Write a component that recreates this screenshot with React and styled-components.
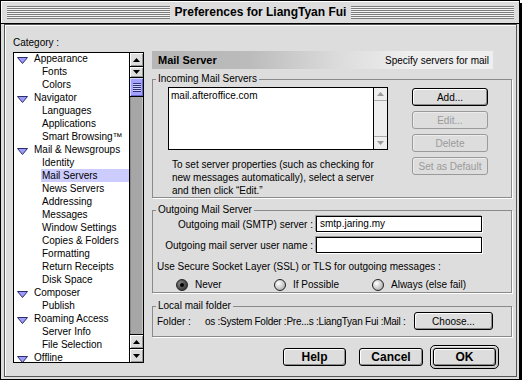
import React from "react";
import styled, { createGlobalStyle } from "styled-components";

const GlobalStyle = createGlobalStyle`
  html, body {
    margin: 0;
    padding: 0;
    background: #fff;
  }
  body {
    font-family: "Liberation Sans", Arial, sans-serif;
    font-size: 10px;
    color: #000;
  }
  * {
    box-sizing: border-box;
  }
`;

const Window = styled.div`
  width: 520px;
  height: 380px;
  border: 1px solid #000;
  background: #dddddd;
  box-shadow: 2px 3px 0 #000;
  display: flex;
  flex-direction: column;
`;

const TitleBar = styled.div`
  height: 23px;
  flex-shrink: 0;
  border-bottom: 1px solid #000;
  box-shadow: inset 1px 1px 0 #fff;
  display: flex;
  align-items: center;
  gap: 3px;
  padding: 0 5px 0 6px;
`;

const Stripes = styled.div`
  flex: 1;
  height: 13px;
  background: repeating-linear-gradient(
    to bottom,
    #7c7c7c 0 1px,
    #f4f4f4 1px 2px
  );
`;

const Title = styled.div`
  font: bold 12px "Liberation Sans", Arial, sans-serif;
  white-space: nowrap;
  padding: 0 2px;
`;

const Content = styled.div`
  flex: 1;
  margin: 0 2px 2px 3px;
  border: 1px solid #555;
  box-shadow: inset 1px 1px 0 #fff;
  display: flex;
  gap: 8px;
  padding: 12px 3px 0 8px;
`;

const Sidebar = styled.div`
  width: 131px;
  display: flex;
  flex-direction: column;
`;

const SideLabel = styled.div`
  line-height: 11px;
  margin-bottom: 4px;
`;

const CategoryList = styled.div`
  height: 311px;
  border: 1px solid #000;
  background: #fff;
  display: flex;
  overflow: hidden;
`;

const Items = styled.div`
  flex: 1;
  overflow: hidden;
  margin-top: -1px;
`;

const Row = styled.div`
  height: 13px;
  display: flex;
  align-items: center;
  padding-left: ${(p) => (p.$top ? 3 : 27)}px;
  white-space: nowrap;
`;

const Twisty = styled.svg`
  width: 11px;
  height: 7px;
  margin: 3px 5px 0 0;
  flex-shrink: 0;
`;

const ItemLabel = styled.span`
  flex: 1;
  line-height: 13px;
  padding-left: 1px;
  background: ${(p) => (p.$selected ? "#ccccff" : "transparent")};
`;

const ScrollBar = styled.div`
  width: 14px;
  border-left: 1px solid #000;
  display: flex;
  flex-direction: column;
  background: ${(p) => (p.$disabled ? "#eeeeee" : "#a6a6a6")};
  box-shadow: ${(p) =>
    p.$disabled ? "none" : "inset 1px 0 0 #8a8a8a, inset -1px 0 0 #c4c4c4"};
`;

const ScrollArrow = styled.div`
  height: ${(p) => p.$h || 14}px;
  flex-shrink: 0;
  display: flex;
  align-items: center;
  justify-content: center;
  background: ${(p) => (p.$disabled ? "#eeeeee" : "#dddddd")};
  border-${(p) => (p.$bottom ? "top" : "bottom")}: 1px solid
    ${(p) => (p.$disabled ? "#aaa" : "#000")};
  box-shadow: ${(p) =>
    p.$disabled ? "none" : "inset 1px 1px 0 #fff, inset -1px -1px 0 #999"};
`;

const Thumb = styled.div`
  height: 19px;
  flex-shrink: 0;
  background: #a3a3ff;
  border-bottom: 1px solid #000;
  box-shadow: inset 1px 1px 0 #d6d6ff, inset -1px -1px 0 #6a6acc;
  display: flex;
  align-items: center;
  justify-content: center;
`;

const Grip = styled.div`
  width: 8px;
  height: 9px;
  background: repeating-linear-gradient(
    to bottom,
    #30307a 0 1px,
    #d0d0ff 1px 2px
  );
`;

const Track = styled.div`
  flex: 1;
`;

const Main = styled.div`
  width: 360px;
  margin-top: 14px;
  display: flex;
  flex-direction: column;
`;

const HeaderBar = styled.div`
  width: 341px;
  height: 18px;
  display: flex;
  align-items: center;
  justify-content: space-between;
  padding: 0 4px 0 6px;
  background: linear-gradient(
    to right,
    #b6b6b6 0%,
    #bbbbbb 28%,
    #dcdcdc 55%,
    #eeeeee 75%,
    #efefef 100%
  );
`;

const HeaderTitle = styled.span`
  font: bold 11px "Liberation Sans", Arial, sans-serif;
`;

const HeaderNote = styled.span`
  font-size: 10px;
`;

const Group = styled.fieldset`
  margin: ${(p) => p.$mt}px 0 0;
  padding: 0;
  min-width: 0;
  border: 1px solid #8a8a8a;
  box-shadow: 1px 1px 0 #fff;
`;

const Legend = styled.legend`
  margin-left: 3px;
  padding: 0 2px;
  line-height: 12px;
  font-size: 10px;
`;

const IncomingBody = styled.div`
  display: grid;
  grid-template-columns: 220px 76px;
  column-gap: 24px;
  padding: 2px 0 0 15px;
`;

const ServerList = styled.div`
  height: 63px;
  border: 1px solid #000;
  background: #fff;
  display: flex;
`;

const ServerItems = styled.div`
  flex: 1;
  padding: 1px 2px;
  line-height: 13px;
`;

const HelpText = styled.p`
  margin: 8px 0 0;
  padding-left: 4px;
  line-height: 13px;
`;

const ButtonColumn = styled.div`
  display: flex;
  flex-direction: column;
  gap: 5px;
  margin-top: 1px;
`;

const PushButton = styled.button`
  width: ${(p) => p.$w}px;
  height: ${(p) => p.$h || 18}px;
  margin-right: ${(p) => p.$mr || 0}px;
  padding: 0;
  border: 1px solid ${(p) => (p.disabled ? "#9a9a9a" : "#000")};
  border-radius: 3px;
  background: #dddddd;
  color: ${(p) => (p.disabled ? "#9a9a9a" : "#000")};
  font: ${(p) => (p.$bold ? "bold 12px" : "10px")} "Liberation Sans", Arial,
    sans-serif;
  box-shadow: ${(p) =>
    p.disabled
      ? "inset 1px 1px 0 #ececec"
      : "inset 1px 1px 0 #fff, inset -1px -1px 0 #8c8c8c"};
  flex-shrink: 0;
`;

const OkFrame = styled.div`
  border: 1px solid #000;
  border-radius: 5px;
  padding: 2px;
  background: #c8c8c8;
  box-shadow: inset 1px 1px 0 #eee;
  display: flex;
`;

const OutgoingBody = styled.div`
  padding: 0 0 1px 4px;
  display: flex;
  flex-direction: column;
`;

const FieldRow = styled.div`
  display: grid;
  grid-template-columns: 156px 166px;
  column-gap: 3px;
  align-items: center;
  margin-top: ${(p) => p.$mt || 0}px;
`;

const FieldLabel = styled.label`
  text-align: right;
  white-space: nowrap;
`;

const TextInput = styled.div`
  height: 16px;
  border: 1px solid #000;
  background: #fff;
  box-shadow: -1px -1px 0 #999, 1px 1px 0 #fff;
  padding: 0 3px;
  line-height: 14px;
`;

const Line = styled.div`
  line-height: 12px;
  margin-top: ${(p) => p.$mt || 0}px;
`;

const RadioRow = styled.div`
  display: grid;
  grid-template-columns: repeat(3, 98px);
  padding-left: 19px;
  margin-top: 6px;
  height: 12px;
`;

const RadioOption = styled.div`
  display: flex;
  align-items: center;
  gap: 7px;
  line-height: 12px;
  white-space: nowrap;
`;

const RadioCircle = styled.span`
  width: 12px;
  height: 12px;
  border-radius: 50%;
  border: 1px solid #222;
  flex-shrink: 0;
  display: flex;
  align-items: center;
  justify-content: center;
  background: ${(p) =>
    p.$checked
      ? "radial-gradient(circle at 35% 35%, #888 0, #555 45%, #2a2a2a 100%)"
      : "radial-gradient(circle at 35% 35%, #fff 0, #d8d8d8 40%, #9a9a9a 100%)"};
`;

const RadioDot = styled.span`
  width: 4px;
  height: 4px;
  border-radius: 50%;
  background: #000;
`;

const FolderBody = styled.div`
  display: flex;
  align-items: center;
  padding: 0 18px 6px 4px;
`;

const FolderLabel = styled.span`
  width: 48px;
  flex-shrink: 0;
`;

const FolderPath = styled.span`
  flex: 1;
  white-space: nowrap;
  letter-spacing: -0.25px;
`;

const ButtonRow = styled.div`
  display: flex;
  align-items: center;
  justify-content: flex-end;
  gap: 7px;
  margin-top: 8px;
  padding-right: 13px;
`;

const Arrow = ({ up, color = "#000" }) => (
  <svg width="7" height="4" viewBox="0 0 7 4">
    <polygon points={up ? "3.5,0 7,4 0,4" : "0,0 7,0 3.5,4"} fill={color} />
  </svg>
);

const categories = [
  { label: "Appearance", top: true },
  { label: "Fonts" },
  { label: "Colors" },
  { label: "Navigator", top: true },
  { label: "Languages" },
  { label: "Applications" },
  { label: "Smart Browsing™" },
  { label: "Mail & Newsgroups", top: true },
  { label: "Identity" },
  { label: "Mail Servers", selected: true },
  { label: "News Servers" },
  { label: "Addressing" },
  { label: "Messages" },
  { label: "Window Settings" },
  { label: "Copies & Folders" },
  { label: "Formatting" },
  { label: "Return Receipts" },
  { label: "Disk Space" },
  { label: "Composer", top: true },
  { label: "Publish" },
  { label: "Roaming Access", top: true },
  { label: "Server Info" },
  { label: "File Selection" },
  { label: "Offline", top: true },
];

const App = () => {
  return (
    <>
      <GlobalStyle />
      <Window>
        <TitleBar>
          <Stripes />
          <Title>Preferences for LiangTyan Fui</Title>
          <Stripes />
        </TitleBar>
        <Content>
          <Sidebar>
            <SideLabel>Category :</SideLabel>
            <CategoryList>
              <Items>
                {categories.map((item) => (
                  <Row key={item.label} $top={item.top}>
                    {item.top && (
                      <Twisty viewBox="0 0 11 7">
                        <polygon
                          points="0.5,0.5 10.5,0.5 5.5,6.5"
                          fill="#9c9cff"
                          stroke="#2c2c66"
                          strokeWidth="1"
                        />
                      </Twisty>
                    )}
                    <ItemLabel $selected={item.selected}>{item.label}</ItemLabel>
                  </Row>
                ))}
              </Items>
              <ScrollBar>
                <ScrollArrow>
                  <Arrow up />
                </ScrollArrow>
                <ScrollArrow $h={11}>
                  <Arrow />
                </ScrollArrow>
                <Thumb>
                  <Grip />
                </Thumb>
                <Track />
                <ScrollArrow $bottom>
                  <Arrow up />
                </ScrollArrow>
                <ScrollArrow $bottom>
                  <Arrow />
                </ScrollArrow>
              </ScrollBar>
            </CategoryList>
          </Sidebar>

          <Main>
            <HeaderBar>
              <HeaderTitle>Mail Server</HeaderTitle>
              <HeaderNote>Specify servers for mail</HeaderNote>
            </HeaderBar>

            <Group $mt={4}>
              <Legend>Incoming Mail Servers</Legend>
              <IncomingBody>
                <div>
                  <ServerList>
                    <ServerItems>mail.afteroffice.com</ServerItems>
                    <ScrollBar $disabled>
                      <ScrollArrow $disabled $h={13}>
                        <Arrow up color="#9a9a9a" />
                      </ScrollArrow>
                      <Track />
                      <ScrollArrow $disabled $bottom $h={13}>
                        <Arrow color="#9a9a9a" />
                      </ScrollArrow>
                    </ScrollBar>
                  </ServerList>
                  <HelpText>
                    To set server properties (such as checking for
                    <br />
                    new messages automatically), select a server
                    <br />
                    and then click “Edit.”
                  </HelpText>
                </div>
                <ButtonColumn>
                  <PushButton $w={76}>Add...</PushButton>
                  <PushButton $w={76} disabled>
                    Edit...
                  </PushButton>
                  <PushButton $w={76} disabled>
                    Delete
                  </PushButton>
                  <PushButton $w={76} disabled>
                    Set as Default
                  </PushButton>
                </ButtonColumn>
              </IncomingBody>
            </Group>

            <Group $mt={6}>
              <Legend>Outgoing Mail Server</Legend>
              <OutgoingBody>
                <FieldRow>
                  <FieldLabel>Outgoing mail (SMTP) server :</FieldLabel>
                  <TextInput>smtp.jaring.my</TextInput>
                </FieldRow>
                <FieldRow $mt={5}>
                  <FieldLabel>Outgoing mail server user name :</FieldLabel>
                  <TextInput />
                </FieldRow>
                <Line $mt={8}>
                  Use Secure Socket Layer (SSL) or TLS for outgoing messages :
                </Line>
                <RadioRow>
                  <RadioOption>
                    <RadioCircle $checked>
                      <RadioDot />
                    </RadioCircle>
                    Never
                  </RadioOption>
                  <RadioOption>
                    <RadioCircle />
                    If Possible
                  </RadioOption>
                  <RadioOption>
                    <RadioCircle />
                    Always (else fail)
                  </RadioOption>
                </RadioRow>
              </OutgoingBody>
            </Group>

            <Group $mt={7}>
              <Legend>Local mail folder</Legend>
              <FolderBody>
                <FolderLabel>Folder :</FolderLabel>
                <FolderPath>
                  os :System Folder :Pre...s :LiangTyan Fui :Mail :
                </FolderPath>
                <PushButton $w={79}>Choose...</PushButton>
              </FolderBody>
            </Group>

            <ButtonRow>
              <PushButton $w={63} $bold $mr={6}>
                Help
              </PushButton>
              <PushButton $w={64} $bold>
                Cancel
              </PushButton>
              <OkFrame>
                <PushButton $w={63} $bold>
                  OK
                </PushButton>
              </OkFrame>
            </ButtonRow>
          </Main>
        </Content>
      </Window>
    </>
  );
};

export default App;
